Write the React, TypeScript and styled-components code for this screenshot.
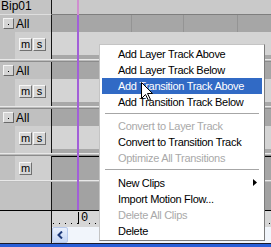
import React from "react";
import styled, { createGlobalStyle } from "styled-components";

const GlobalStyle = createGlobalStyle`
  html, body {
    margin: 0;
    padding: 0;
    background: #c0c0c0;
  }
  * {
    box-sizing: border-box;
  }
`;

const Frame = styled.div`
  position: relative;
  width: 271px;
  height: 247px;
  overflow: hidden;
  display: flex;
  flex-direction: column;
  font-family: "Liberation Sans", Arial, sans-serif;
  font-size: 11px;
  color: #000;
  background: #c0c0c0;
`;

const Row = styled.div<{ $h: number }>`
  display: flex;
  height: ${(p) => p.$h}px;
  flex: none;
`;

const LeftCell = styled.div<{ $bg?: string }>`
  width: 52px;
  flex: none;
  display: flex;
  align-items: center;
  background: ${(p) => p.$bg || "#c0c0c0"};
  border-right: 1px solid #141414;
`;

const RightCell = styled.div<{ $bg?: string; $grid?: boolean; $topLine?: boolean }>`
  flex: 1;
  background: ${(p) => p.$bg || "#a6a6a6"};
  ${(p) =>
    p.$grid &&
    `background-image:
      linear-gradient(#949494, #949494),
      linear-gradient(#949494, #949494),
      linear-gradient(#949494, #949494);
    background-size: 1px 100%;
    background-repeat: no-repeat;
    background-position: 79px 0, 131px 0, 185px 0;`}
  ${(p) => p.$topLine && "border-top: 1px solid #000;"}
`;

const HeadLeft = styled(LeftCell)`
  padding-left: 1px;
  font-size: 12px;
  align-items: flex-start;
  line-height: 12px;
  border-bottom: 1px solid #dedede;
`;

const HeadRight = styled(RightCell)`
  border-bottom: 1px solid #7e7e7e;
`;

const Label = styled.span`
  font-size: 12px;
  margin-left: 2px;
`;

const TinyButton = styled.div`
  width: 11px;
  height: 11px;
  margin-left: 3px;
  background: #d4d4d4;
  border: 1px solid;
  border-color: #f4f4f4 #6a6a6a #6a6a6a #f4f4f4;
  display: flex;
  align-items: flex-end;
  justify-content: center;
  padding-bottom: 3px;
  &::after {
    content: "";
    width: 1px;
    height: 1px;
    background: #000;
  }
`;

const MsLeft = styled(LeftCell)`
  align-items: flex-start;
  padding-left: 15px;
  background: #c0c0c0;
`;

const MsBox = styled.div`
  flex: 1;
  align-self: stretch;
  background: #cfcfcf;
  display: flex;
  gap: 1px;
  padding: 6px 0 0 4px;
`;

const ToggleButton = styled.div`
  width: 13px;
  height: 13px;
  background: #d6d6d6;
  border: 1px solid;
  border-color: #f6f6f6 #707070 #707070 #f6f6f6;
  display: flex;
  align-items: center;
  justify-content: center;
  font-size: 11px;
  line-height: 11px;
  padding-bottom: 1px;
`;

const MsRight = styled(RightCell)`
  background: #d4d4d4;
  border-bottom: 4px solid #a8a8a8;
`;

const Separator = styled.div`
  height: 3px;
  flex: none;
  background: #bcbcbc;
  border-top: 1px solid #e8e8e8;
  border-bottom: 1px solid #8c8c8c;
`;

const ThinSeparator = styled(Separator)`
  height: 2px;
  border-bottom: none;
`;

const RulerLine = styled.div`
  display: flex;
  height: 1px;
  flex: none;
  background: #000;
`;

const FooterLeft = styled(LeftCell)`
  background: #cbcbcb;
`;

const FooterRight = styled.div`
  flex: 1;
  display: flex;
  flex-direction: column;
`;

const Ruler = styled.div`
  height: 16px;
  background-color: #d6d6d6;
  background-image: repeating-linear-gradient(
    to right,
    #000 0,
    #000 1px,
    transparent 1px,
    transparent 6px
  );
  background-size: 100% 1px;
  background-position: 1px 12px;
  background-repeat: no-repeat;
  position: relative;
  display: flex;
  align-items: flex-start;
`;

const RulerMark = styled.div`
  margin-left: 26px;
  margin-top: 1px;
  height: 12px;
  border-left: 1px solid #000;
  padding-left: 2px;
  font-family: "Liberation Mono", monospace;
  font-size: 12px;
  line-height: 12px;
  background: #d6d6d6;
`;

const ScrollBar = styled.div`
  height: 16px;
  background: #f1f5fb;
  display: flex;
`;

const ScrollButton = styled.div`
  width: 16px;
  height: 16px;
  background: linear-gradient(#e9f0fd, #c6d6f4);
  border: 1px solid #b7c9ec;
  border-radius: 2px;
  display: flex;
  align-items: center;
  justify-content: center;
`;

const BlueBar = styled.div`
  height: 4px;
  flex: none;
  background: #2a5fd8;
  border-top: 1px solid #1b1b2a;
`;

const TimeCursor = styled.div<{ $top: number; $h: number; $color: string }>`
  position: absolute;
  left: 77px;
  top: ${(p) => p.$top}px;
  width: 2px;
  height: ${(p) => p.$h}px;
  background: ${(p) => p.$color};
`;

const Menu = styled.div`
  position: absolute;
  left: 99px;
  top: 44px;
  width: 166px;
  height: 197px;
  background: #fff;
  border: 1px solid;
  border-color: #c4c4c4 #7c7c7c #7c7c7c #c4c4c4;
  padding: 1px 2px;
  display: flex;
  flex-direction: column;
`;

const MenuItem = styled.div<{ $active?: boolean; $disabled?: boolean }>`
  height: 16px;
  line-height: 16px;
  padding-left: 16px;
  letter-spacing: -0.3px;
  white-space: nowrap;
  position: relative;
  background: ${(p) => (p.$active ? "#316ac5" : "transparent")};
  color: ${(p) => (p.$active ? "#fff" : p.$disabled ? "#a9a9a9" : "#000")};
`;

const MenuSeparator = styled.div<{ $h: number }>`
  height: ${(p) => p.$h}px;
  padding: 3px 3px 0;
  &::before {
    content: "";
    display: block;
    height: 1px;
    background: #a6a6a6;
  }
`;

const SubArrow = styled.svg`
  position: absolute;
  right: 5px;
  top: 4px;
`;

const MouseCursor = styled.svg`
  position: absolute;
  left: 141px;
  top: 82px;
`;

type MenuEntry =
  | { label: string; active?: boolean; disabled?: boolean; sub?: boolean }
  | { sep: number };

const menuEntries: MenuEntry[] = [
  { label: "Add Layer Track Above" },
  { label: "Add Layer Track Below" },
  { label: "Add Transition Track Above", active: true },
  { label: "Add Transition Track Below" },
  { sep: 8 },
  { label: "Convert to Layer Track", disabled: true },
  { label: "Convert to Transition Track" },
  { label: "Optimize All Transitions", disabled: true },
  { sep: 9 },
  { label: "New Clips", sub: true },
  { label: "Import Motion Flow..." },
  { label: "Delete All Clips", disabled: true },
  { label: "Delete" },
];

const LayerGroup = () => (
  <>
    <Row $h={17}>
      <LeftCell>
        <TinyButton />
        <Label>All</Label>
      </LeftCell>
      <RightCell $grid />
    </Row>
    <Row $h={27}>
      <MsLeft>
        <MsBox>
          <ToggleButton>m</ToggleButton>
          <ToggleButton>s</ToggleButton>
        </MsBox>
      </MsLeft>
      <MsRight />
    </Row>
    <Separator />
  </>
);

export default function App() {
  return (
    <>
      <GlobalStyle />
      <Frame>
        <Row $h={15}>
          <HeadLeft $bg="#c4c4c4">Bip01</HeadLeft>
          <HeadRight $bg="#c9c9c9" />
        </Row>

        <LayerGroup />
        <LayerGroup />
        <LayerGroup />

        <Row $h={24}>
          <MsLeft>
            <MsBox>
              <ToggleButton>m</ToggleButton>
            </MsBox>
          </MsLeft>
          <RightCell $topLine $grid />
        </Row>
        <ThinSeparator />

        <Row $h={28}>
          <LeftCell $bg="#c2c2c2" />
          <RightCell $bg="#a2a2a2" />
        </Row>
        <RulerLine />

        <Row $h={32}>
          <FooterLeft />
          <FooterRight>
            <Ruler>
              <RulerMark>0</RulerMark>
            </Ruler>
            <ScrollBar>
              <ScrollButton>
                <svg width="7" height="8" viewBox="0 0 7 8">
                  <path d="M5 0.5 L1.5 4 L5 7.5" fill="none" stroke="#1e3a7a" strokeWidth="2" />
                </svg>
              </ScrollButton>
            </ScrollBar>
          </FooterRight>
        </Row>
        <BlueBar />

        <TimeCursor $top={0} $h={15} $color="#cf8fcf" />
        <TimeCursor $top={15} $h={195} $color="#a25fd8" />

        <Menu>
          {menuEntries.map((e, i) =>
            "sep" in e ? (
              <MenuSeparator key={i} $h={e.sep} />
            ) : (
              <MenuItem key={i} $active={e.active} $disabled={e.disabled}>
                {e.label}
                {e.sub && (
                  <SubArrow width="4" height="7" viewBox="0 0 4 7">
                    <path d="M0 0 L4 3.5 L0 7 Z" fill="#000" />
                  </SubArrow>
                )}
              </MenuItem>
            )
          )}
        </Menu>

        <MouseCursor width="13" height="20" viewBox="0 0 13 20">
          <path
            d="M0.5 0.5 L0.5 16.5 L4.5 12.5 L7.5 18.5 L9.5 17.5 L6.5 11.5 L11.5 11.5 Z"
            fill="#fff"
            stroke="#000"
            strokeWidth="1"
          />
        </MouseCursor>
      </Frame>
    </>
  );
}
